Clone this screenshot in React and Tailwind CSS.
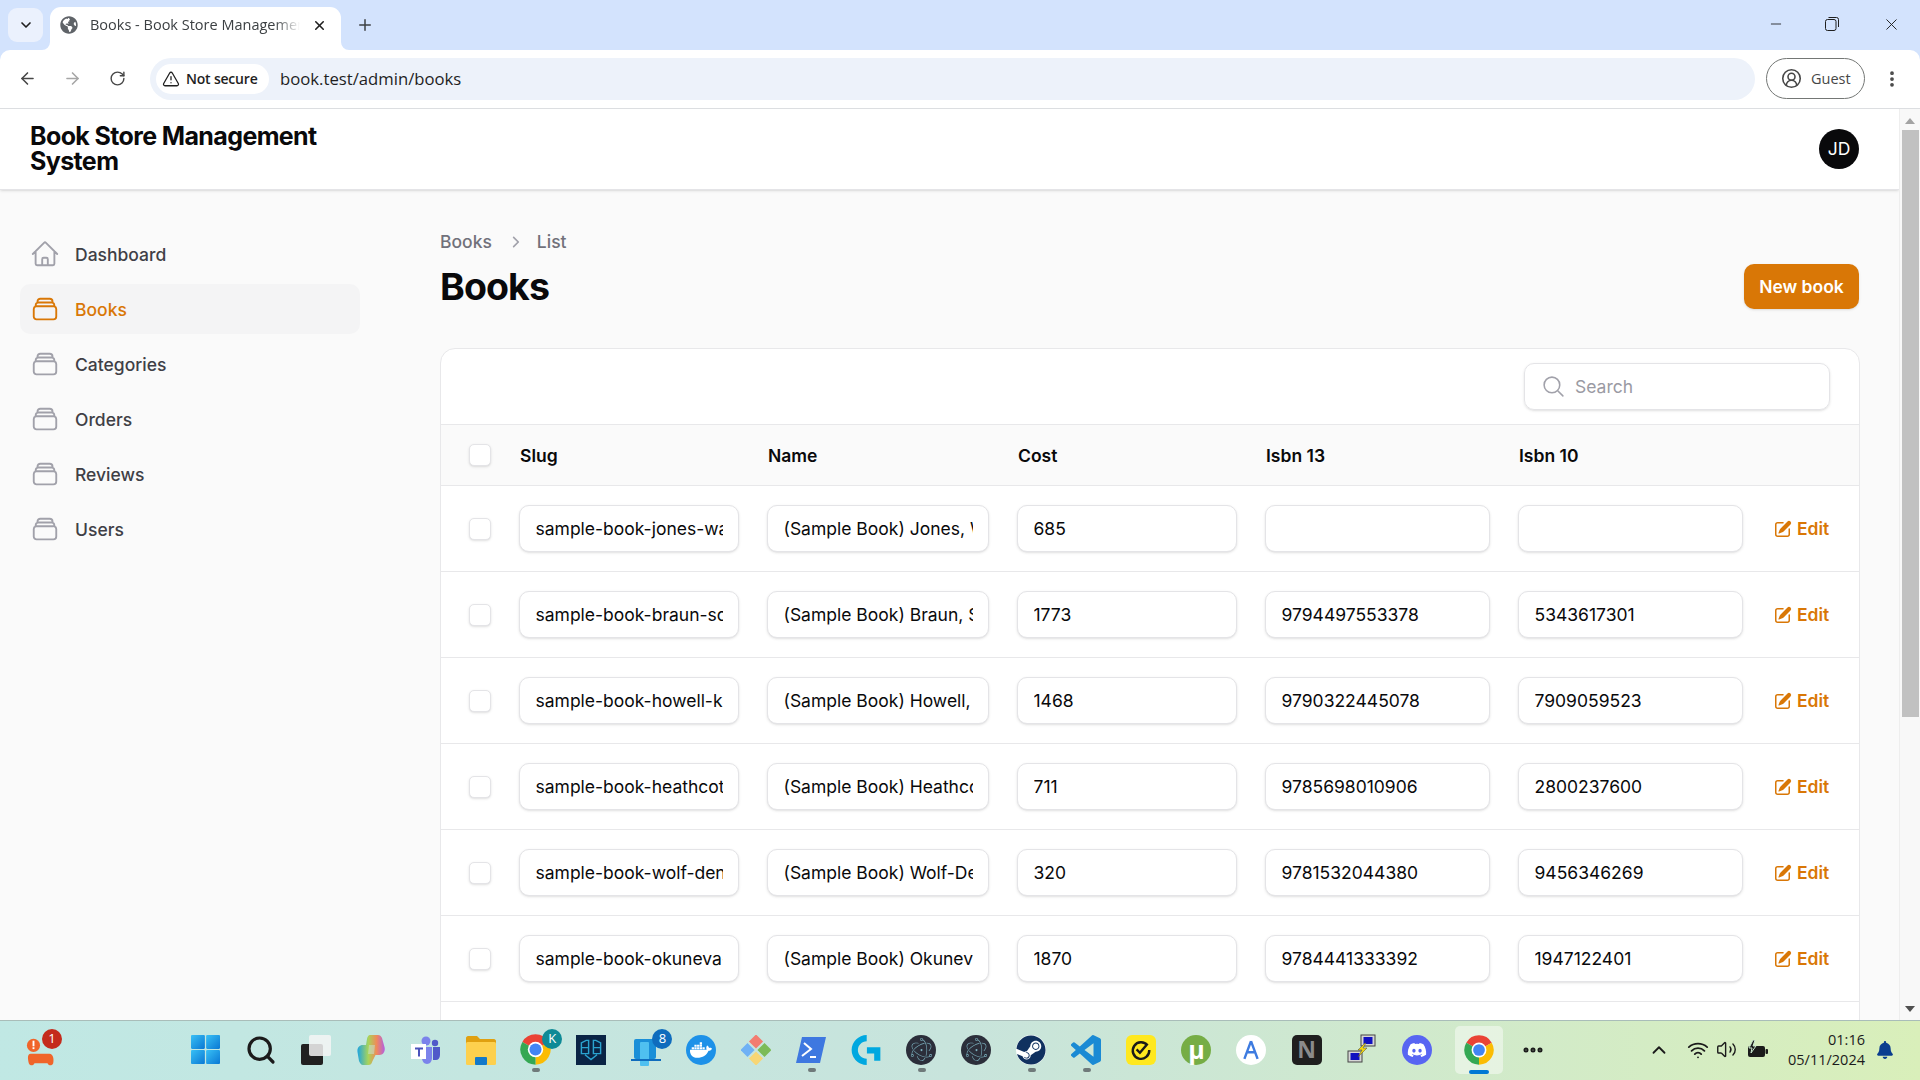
import { ArrowLeft, ArrowRight, RotateCw, TriangleAlert, X, Plus, ChevronDown, ChevronUp, EllipsisVertical, Minus, CircleUserRound, Search, Wifi, Volume2, Ellipsis } from "lucide-react";
import { FaGlobeAmericas, FaDocker, FaSteam, FaDiscord, FaBell } from "react-icons/fa";
import { SiElectron, SiLogitechg } from "react-icons/si";
import { HiOutlineHome, HiOutlineRectangleStack, HiOutlineMagnifyingGlass, HiMiniChevronRight, HiMiniPencilSquare } from "react-icons/hi2";

const navItems = [
	{ label: "Dashboard", home: true },
	{ label: "Books", active: true },
	{ label: "Categories" },
	{ label: "Orders" },
	{ label: "Reviews" },
	{ label: "Users" },
];

const books = [
	{ slug: "sample-book-jones-walter-and-sons", name: "(Sample Book) Jones, Walter and Sons", cost: "685", isbn13: "", isbn10: "" },
	{ slug: "sample-book-braun-schuster-group", name: "(Sample Book) Braun, Schuster and Co", cost: "1773", isbn13: "9794497553378", isbn10: "5343617301" },
	{ slug: "sample-book-howell-kris-and-daughters", name: "(Sample Book) Howell, Kris and Sons", cost: "1468", isbn13: "9790322445078", isbn10: "7909059523" },
	{ slug: "sample-book-heathcote-mraz-group", name: "(Sample Book) Heathcote, Mraz Group", cost: "711", isbn13: "9785698010906", isbn10: "2800237600" },
	{ slug: "sample-book-wolf-denesik-llc", name: "(Sample Book) Wolf-Denesik LLC", cost: "320", isbn13: "9781532044380", isbn10: "9456346269" },
	{ slug: "sample-book-okuneva-hills-inc", name: "(Sample Book) Okuneva, Hills Inc", cost: "1870", isbn13: "9784441333392", isbn10: "1947122401" },
];

const rowGrid = "grid grid-cols-[22px_220px_222px_220px_225px_225px_auto] gap-x-7 items-center pl-[28px]";
const headCell = "pl-[1px] pt-[2px]";

function Chrome({ className }) {
	return (
		<svg viewBox="0 0 24 24" className={className}>
			<path d="M12 12L2.47 6.5A11 11 0 0 1 21.53 6.5Z" fill="#ea4335" />
			<path d="M12 12L21.53 6.5A11 11 0 0 1 12 23Z" fill="#fbbc04" />
			<path d="M12 12L12 23A11 11 0 0 1 2.47 6.5Z" fill="#34a853" />
			<circle cx="12" cy="12" r="5.6" fill="#fff" />
			<circle cx="12" cy="12" r="4.4" fill="#4285f4" />
		</svg>
	);
}

function Checkbox() {
	return <div className="w-[22px] h-[22px] rounded-[5px] bg-white border border-[#e4e4e7] shadow-sm" />;
}

function Slot({ dot, children }) {
	return (
		<div className="relative w-[55.05px] h-full shrink-0 flex items-center justify-center">
			{children}
			{dot && <div className="absolute bottom-[6px] left-[24px] w-[8px] h-[4px] rounded-full bg-[#6f7a7a]" />}
		</div>
	);
}

function Badge({ color, children }) {
	return (
		<div className={`absolute top-[8px] left-[34px] w-[20px] h-[20px] rounded-full ${color} text-white text-[13px] flex items-center justify-center [font-family:'Open_Sans',sans-serif]`}>
			{children}
		</div>
	);
}

function BrowserBar() {
	return (
		<>
			<div className="h-[50px] flex items-end bg-[#d3e3fd] [font-family:'Open_Sans',sans-serif]">
				<div className="w-[35px] h-[34px] ml-[8px] mb-[8px] rounded-[9px] bg-[#ebf1fd] flex items-center justify-center">
					<ChevronDown className="w-[16px] h-[16px] text-[#1f1f1f]" strokeWidth={2.5} />
				</div>
				<div className="relative w-[291px] h-[43px] ml-[7px] bg-white rounded-t-[11px] flex items-center pl-[10px] pb-[7px]">
					<FaGlobeAmericas className="w-[18px] h-[18px] text-[#5f6368]" />
					<span className="ml-[12px] w-[210px] overflow-hidden whitespace-nowrap text-[14.5px] text-[#3c4043] [mask-image:linear-gradient(to_right,black_88%,transparent)]">Books - Book Store Management</span>
					<X className="ml-[12px] w-[15px] h-[15px] text-[#1f1f1f]" strokeWidth={2.5} />
					<svg viewBox="0 0 8 8" className="absolute bottom-0 -left-[8px] w-[8px] h-[8px]"><path d="M8 0V8H0A8 8 0 0 0 8 0Z" fill="#fff" /></svg>
					<svg viewBox="0 0 8 8" className="absolute bottom-0 -right-[8px] w-[8px] h-[8px]"><path d="M0 0V8H8A8 8 0 0 1 0 0Z" fill="#fff" /></svg>
				</div>
				<Plus className="ml-[15px] mb-[16px] w-[18px] h-[18px] text-[#3c4043]" strokeWidth={2} />
				<div className="flex-1" />
				<div className="flex items-center h-[50px] pb-[2px] text-[#1f1f1f]">
					<Minus className="w-[16px] h-[16px] mr-[41px]" strokeWidth={1.3} />
					<svg viewBox="0 0 14 14" className="w-[14px] h-[14px] mr-[43px]" fill="none" stroke="currentColor"><rect x="0.5" y="2.5" width="10.5" height="11" rx="2" /><path d="M3.5 0.5H11.5a2 2 0 0 1 2 2V10" /></svg>
					<X className="w-[19px] h-[19px] mr-[19px]" strokeWidth={1.2} />
				</div>
			</div>
			<div className="h-[59px] flex items-center bg-white rounded-t-[10px] border-b border-[#dcdee1] pb-[1px] [font-family:'Open_Sans',sans-serif]">
				<ArrowLeft className="ml-[18px] w-[19px] h-[19px] text-[#474747]" strokeWidth={2} />
				<ArrowRight className="ml-[26px] w-[19px] h-[19px] text-[#a6a6a6]" strokeWidth={2} />
				<RotateCw className="ml-[27px] w-[17px] h-[17px] text-[#474747]" strokeWidth={2} />
				<div className="ml-[24px] w-[1605px] h-[42px] rounded-full bg-[#edf2fa] flex items-center pl-[6px]">
					<div className="w-[113px] h-[30px] rounded-full bg-white flex items-center pl-[6px]">
						<TriangleAlert className="w-[18px] h-[18px] text-[#1f1f1f]" strokeWidth={1.7} />
						<span className="ml-[6px] text-[14px] font-semibold text-[#1f1f1f] whitespace-nowrap tracking-[-0.2px]">Not secure</span>
					</div>
					<span className="ml-[11px] pt-[1px] text-[16.7px] text-[#1f1f1f]">book.test/admin/books</span>
				</div>
				<div className="ml-[11px] w-[99px] h-[41px] rounded-full border border-[#747775] flex items-center pl-[14px]">
					<CircleUserRound className="w-[21px] h-[21px] text-[#474747]" strokeWidth={1.8} />
					<span className="ml-[9px] text-[14.5px] text-[#474747]">Guest</span>
				</div>
				<EllipsisVertical className="ml-[17px] w-[20px] h-[20px] text-[#474747]" strokeWidth={2.5} />
			</div>
		</>
	);
}

function Sidebar() {
	return (
		<aside className="w-[360px] shrink-0 pl-[20px] pt-[39px] flex flex-col gap-[5px]">
			{navItems.map((item) => (
				<div key={item.label} className={`w-[340px] h-[50px] rounded-[10px] flex items-center pl-[12px] ${item.active ? "bg-[#f4f4f5]" : ""}`}>
					{item.home ? (
						<HiOutlineHome className="w-[30px] h-[30px] -mx-[2.5px] text-[#a1a1aa]" />
					) : (
						<HiOutlineRectangleStack className={`w-[30px] h-[30px] -mx-[2.5px] ${item.active ? "text-[#d97706]" : "text-[#a1a1aa]"}`} />
					)}
					<span className={`ml-[18px] pt-[2px] text-[17.5px] font-medium ${item.active ? "text-[#d97706]" : "text-[#3f3f46]"}`}>{item.label}</span>
				</div>
			))}
		</aside>
	);
}

function BookRow({ book }) {
	const fields = [book.slug, book.name, book.cost, book.isbn13, book.isbn10];
	return (
		<div className={`${rowGrid} h-[86px] border-t border-[#e8e8ea] bg-white`}>
			<Checkbox />
			{fields.map((value, i) => (
				<input
					key={i}
					readOnly
					value={value}
					className="w-full h-[47px] px-[15.5px] rounded-[10px] border border-[#e4e4e7] shadow-sm bg-white text-[17.5px] text-[#09090b] outline-none"
				/>
			))}
			<div className="ml-[2px] flex items-center gap-[4px] text-[#d97706] text-[17.5px] font-semibold whitespace-nowrap">
				<HiMiniPencilSquare className="w-[20px] h-[20px]" />
				<span className="pt-[2px]">Edit</span>
			</div>
		</div>
	);
}

function BooksTable() {
	return (
		<div className="mt-[39px] -mr-[1px] rounded-t-[15px] border border-[#e8e8ea] bg-white">
			<div className="h-[75px] flex items-center justify-end pr-[29px]">
				<div className="w-[306px] h-[47px] rounded-[10px] border border-[#e4e4e7] shadow-sm flex items-center pl-[16px]">
					<HiOutlineMagnifyingGlass className="w-[25px] h-[25px] text-[#a1a1aa]" />
					<span className="ml-[9px] pt-[2px] text-[17.5px] text-[#9a9aa3]">Search</span>
				</div>
			</div>
			<div className={`${rowGrid} h-[61px] border-t border-[#e8e8ea] bg-[#fafafa] text-[17.5px] font-semibold text-[#09090b]`}>
				<Checkbox />
				<span className={headCell}>Slug</span>
				<span className={headCell}>Name</span>
				<span className={headCell}>Cost</span>
				<span className={headCell}>Isbn 13</span>
				<span className={headCell}>Isbn 10</span>
			</div>
			{books.map((book) => (
				<BookRow key={book.slug} book={book} />
			))}
			<div className="h-[86px] border-t border-[#e8e8ea]" />
		</div>
	);
}

function Page() {
	return (
		<div className="flex-1 min-w-0 overflow-hidden bg-[#fafafa] font-['Inter',sans-serif]">
			<header className="h-[81px] bg-white border-b border-[#e4e4e7] shadow-sm flex items-center justify-between pl-[30px] pr-[40px]">
				<div className="w-[300px] text-[25px] leading-[25.5px] font-bold tracking-[-0.62px] text-[#09090b]">Book Store Management System</div>
				<div className="w-[40px] h-[40px] rounded-full bg-[#09090b] text-white text-[17.5px] flex items-center justify-center">JD</div>
			</header>
			<div className="flex">
				<Sidebar />
				<main className="flex-1 min-w-0 pl-[80px] pr-[40px] pt-[41px]">
					<div className="h-[22px] flex items-center text-[17.5px] font-medium text-[#71717a]">
						Books
						<HiMiniChevronRight className="w-[22px] h-[22px] ml-[12px] mr-[11px] text-[#a1a1aa]" />
						List
					</div>
					<div className="mt-[11px] flex items-center justify-between">
						<h1 className="text-[37.5px] leading-[45px] font-bold tracking-[-0.9px] text-[#09090b]">Books</h1>
						<button className="w-[115px] h-[45px] pt-[1px] rounded-[10px] bg-[#d97706] text-white text-[17.5px] font-semibold shadow-sm">New book</button>
					</div>
					<BooksTable />
				</main>
			</div>
		</div>
	);
}

function Scrollbar() {
	return (
		<div className="w-[21px] shrink-0 bg-[#f8f8f8] border-l border-[#eeeeee] flex flex-col items-center">
			<svg viewBox="0 0 10 6" className="w-[10px] h-[6px] mt-[9px]"><path d="M5 0L10 6H0Z" fill="#a3a3a3" /></svg>
			<div className="mt-[6px] w-[17px] h-[587px] bg-[#c1c1c1]" />
			<div className="flex-1" />
			<svg viewBox="0 0 10 6" className="w-[10px] h-[6px] mb-[8px]"><path d="M0 0H10L5 6Z" fill="#505050" /></svg>
		</div>
	);
}

function Taskbar() {
	return (
		<div className="h-[60px] shrink-0 flex items-center border-t border-[#a9bdb9] bg-gradient-to-r from-[#c0e8e4] via-[#c8e4dc] to-[#d9efba] pl-[13px] pb-[2px] [font-family:'Open_Sans',sans-serif]">
			<Slot>
				<svg viewBox="0 0 32 34" className="w-[30px] h-[34px] mt-[2px]">
					<circle cx="8" cy="11" r="7" fill="#f0652a" />
					<rect x="7" y="6" width="2" height="6" fill="#fff" />
					<rect x="7" y="13" width="2" height="2" fill="#fff" />
					<path d="M5 20h20c4 0 5 6 4 10-1 3-5 3-6 0H9c-1 3-5 3-6 0-1-4-2-10 2-10Z" fill="#f0652a" />
				</svg>
				<div className="absolute top-[8px] left-[29px] w-[20px] h-[20px] rounded-full bg-[#c42b1c] text-white text-[13px] flex items-center justify-center">1</div>
			</Slot>
			<div className="w-[110px] shrink-0" />
			<Slot>
				<svg viewBox="0 0 28 28" className="w-[29px] h-[29px]">
					<defs>
						<linearGradient id="win" x1="0" y1="0" x2="1" y2="1"><stop offset="0" stopColor="#38c0f5" /><stop offset="1" stopColor="#0a78d4" /></linearGradient>
					</defs>
					<rect x="0" y="0" width="13.4" height="13.4" rx="1" fill="url(#win)" />
					<rect x="14.6" y="0" width="13.4" height="13.4" rx="1" fill="url(#win)" />
					<rect x="0" y="14.6" width="13.4" height="13.4" rx="1" fill="url(#win)" />
					<rect x="14.6" y="14.6" width="13.4" height="13.4" rx="1" fill="url(#win)" />
				</svg>
			</Slot>
			<Slot><Search className="w-[32px] h-[32px] text-[#1b1b1b]" strokeWidth={2.4} /></Slot>
			<Slot>
				<svg viewBox="0 0 30 30" className="w-[30px] h-[30px]">
					<rect x="0" y="9" width="22" height="21" rx="2" fill="#202020" />
					<rect x="8" y="0" width="22" height="21" rx="2" fill="#f4f4f4" fillOpacity="0.85" />
				</svg>
			</Slot>
			<Slot>
				<svg viewBox="0 0 28 30" className="w-[28px] h-[30px]">
					<defs>
						<linearGradient id="cop" x1="0" y1="0" x2="1" y2="0"><stop offset="0" stopColor="#1fa5e0" /><stop offset="0.4" stopColor="#a8d45a" /><stop offset="0.7" stopColor="#f08a5a" /><stop offset="1" stopColor="#b45fe0" /></linearGradient>
					</defs>
					<path d="M13 0h8c2 0 3 1 4 3l2.500 9c1 4-1 8-5 8h-4l-3 6c-1 3-2 4-4 4H6c-2 0-3-2-4-4L.500 17C0 13 2 10 6 10h3l1-6c.3-2 1.500-4 3-4Z" fill="url(#cop)" />
					<path d="M12 10h6l-1 9h-6Z" fill="#c8e4dc" fillOpacity="0.5" />
				</svg>
			</Slot>
			<Slot>
				<svg viewBox="0 0 30 30" className="w-[30px] h-[30px]">
					<circle cx="15" cy="6" r="4.500" fill="#7b83eb" />
					<circle cx="24" cy="8" r="3.200" fill="#5059c9" />
					<path d="M11 12h10v11c0 3-2 6-5 6s-5-3-5-6Z" fill="#7b83eb" />
					<path d="M22 12h7v8c0 3-2 5-4 5h-3Z" fill="#5059c9" />
					<rect x="0" y="9" width="15" height="15" fill="#fff" />
					<path d="M4 12.500h8v2H9v7H7v-7H4Z" fill="#4b53bc" />
				</svg>
			</Slot>
			<Slot>
				<svg viewBox="0 0 30 30" className="w-[30px] h-[30px]">
					<path d="M0 3c0-1 1-2 2-2h9l3 3h14c1 0 2 1 2 2v4H0Z" fill="#e0a010" />
					<rect x="0" y="7" width="30" height="23" rx="1.500" fill="#fdd04e" />
					<rect x="9" y="22" width="12" height="8" rx="1" fill="#1479c9" />
				</svg>
			</Slot>
			<Slot dot>
				<Chrome className="w-[33px] h-[33px]" />
				<Badge color="bg-[#0e8a96]">K</Badge>
			</Slot>
			<Slot>
				<div className="w-[30px] h-[30px] bg-[#0a2445] flex items-center justify-center">
					<svg viewBox="0 0 20 20" className="w-[24px] h-[24px]" fill="none" stroke="#2aa3d0" strokeWidth="1.2"><path d="M2 4l4-2h2v11H2ZM18 4l-4-2h-2v11h6ZM2 8h6M12 8h6M5 14l5 4 5-4" /></svg>
				</div>
			</Slot>
			<Slot>
				<svg viewBox="0 0 30 32" className="w-[30px] h-[32px] mt-[2px]">
					<rect x="3" y="4" width="22" height="20" rx="2" fill="#1a8fd8" />
					<rect x="9" y="7" width="9" height="24" rx="1" fill="#4fc0f0" />
					<rect x="0" y="24" width="30" height="2" fill="#0f6cbd" />
				</svg>
				<Badge color="bg-[#0f6cbd]">8</Badge>
			</Slot>
			<Slot>
				<div className="w-[30px] h-[30px] rounded-full bg-[#1d91e8] flex items-center justify-center">
					<FaDocker className="w-[22px] h-[22px] text-white" />
				</div>
			</Slot>
			<Slot>
				<svg viewBox="0 0 30 30" className="w-[30px] h-[30px]">
					<rect x="10" y="1.500" width="10" height="10" transform="rotate(45 15 6.500)" fill="#f37c70" />
					<rect x="18.500" y="10" width="10" height="10" transform="rotate(45 23.500 15)" fill="#7cbb56" />
					<rect x="10" y="18.500" width="10" height="10" transform="rotate(45 15 23.500)" fill="#f7d675" />
					<rect x="1.500" y="10" width="10" height="10" transform="rotate(45 6.500 15)" fill="#6fb1f5" />
				</svg>
			</Slot>
			<Slot dot>
				<svg viewBox="0 0 30 30" className="w-[30px] h-[30px]">
					<path d="M6 2H30L24 28H0Z" fill="#3e78e0" />
					<path d="M8 8l7 6-9 7M14 22h6" fill="none" stroke="#fff" strokeWidth="2" />
				</svg>
			</Slot>
			<Slot><SiLogitechg className="w-[30px] h-[30px] text-[#00a8e0]" /></Slot>
			<Slot dot>
				<div className="w-[30px] h-[30px] rounded-full bg-[#2b2e3a] flex items-center justify-center"><SiElectron className="w-[23px] h-[23px] text-[#9feaf9] opacity-70" /></div>
			</Slot>
			<Slot>
				<div className="w-[30px] h-[30px] rounded-full bg-[#2b2e3a] flex items-center justify-center"><SiElectron className="w-[23px] h-[23px] text-[#9feaf9] opacity-70" /></div>
			</Slot>
			<Slot dot>
				<div className="w-[30px] h-[30px] rounded-full bg-white flex items-center justify-center"><FaSteam className="w-[30px] h-[30px] text-[#10315f]" /></div>
			</Slot>
			<Slot dot>
				<svg viewBox="0 0 24 24" className="w-[30px] h-[30px]"><path fill="#1a8ad4" d="M23.15 2.587L18.21.21a1.494 1.494 0 0 0-1.705.29l-9.46 8.63-4.12-3.128a.999.999 0 0 0-1.276.057L.327 7.261A1 1 0 0 0 .326 8.74L3.899 12 .326 15.26a1 1 0 0 0 .001 1.479L1.65 17.94a.999.999 0 0 0 1.276.057l4.12-3.128 9.46 8.63a1.492 1.492 0 0 0 1.704.29l4.942-2.377A1.5 1.5 0 0 0 24 20.06V3.939a1.5 1.5 0 0 0-.85-1.352zm-5.146 14.861L10.826 12l7.178-5.448v10.896z" /></svg>
			</Slot>
			<Slot>
				<div className="w-[30px] h-[30px] rounded-[6px] bg-[#ffe81f] flex items-center justify-center">
					<svg viewBox="0 0 20 20" className="w-[22px] h-[22px]" fill="none" stroke="#1a1a1a" strokeWidth="2.2"><path d="M16 6A7.5 7.5 0 1 0 17.5 10" /><path d="M6 9.500l3 3 6-7" /></svg>
				</div>
			</Slot>
			<Slot>
				<div className="w-[30px] h-[30px] rounded-full bg-[#76ad45] text-white text-[25px] font-bold flex items-center justify-center leading-none">µ</div>
			</Slot>
			<Slot>
				<div className="w-[30px] h-[30px] rounded-full bg-white flex items-center justify-center">
					<svg viewBox="0 0 20 20" className="w-[22px] h-[22px]" fill="none" stroke="#3d7be0" strokeWidth="2.2"><path d="M10 2L4 18M10 2l6 16M6 12h8" /></svg>
				</div>
			</Slot>
			<Slot>
				<div className="w-[30px] h-[30px] rounded-[5px] bg-[#1f1f1f] text-[#8b8b8b] text-[23px] font-bold flex items-center justify-center">N</div>
			</Slot>
			<Slot>
				<svg viewBox="0 0 30 32" className="w-[30px] h-[32px]">
					<rect x="14" y="1" width="14" height="11" fill="#d6d6d6" stroke="#444" />
					<rect x="16.500" y="3" width="9" height="7" fill="#1010c0" />
					<rect x="1" y="17" width="14" height="11" fill="#d6d6d6" stroke="#444" />
					<rect x="3.500" y="19" width="9" height="7" fill="#1010c0" />
					<path d="M18 9L11 16h4l-4 7 9-9h-4l3-5Z" fill="#f5d90a" stroke="#444" strokeWidth="0.5" />
				</svg>
			</Slot>
			<Slot>
				<div className="w-[30px] h-[30px] rounded-full bg-[#5865f2] flex items-center justify-center"><FaDiscord className="w-[20px] h-[20px] text-white" /></div>
			</Slot>
			<div className="relative ml-[11px] w-[48px] h-[48px] rounded-[5px] bg-white/45 flex items-center justify-center shrink-0">
				<Chrome className="w-[32px] h-[32px]" />
				<div className="absolute bottom-0 left-[14px] w-[20px] h-[4px] rounded-full bg-[#0078d4]" />
			</div>
			<Ellipsis className="ml-[18px] w-[24px] h-[24px] text-[#1b1b1b]" strokeWidth={3} />
			<div className="flex-1" />
			<ChevronUp className="w-[22px] h-[22px] text-[#1b1b1b]" strokeWidth={2} />
			<Wifi className="ml-[17px] w-[22px] h-[22px] text-[#1b1b1b]" strokeWidth={2} />
			<Volume2 className="ml-[7px] w-[21px] h-[21px] text-[#1b1b1b]" strokeWidth={1.6} />
			<svg viewBox="0 0 22 20" className="ml-[10px] w-[22px] h-[20px]">
				<rect x="1" y="6" width="17" height="11" rx="2" fill="#1b1b1b" />
				<rect x="18.500" y="9" width="2.500" height="5" rx="1" fill="#1b1b1b" />
				<path d="M6 0L2 8h3l-1 5 5-7H6l2-6Z" fill="#1b1b1b" stroke="#c9e8d0" strokeWidth="1" />
			</svg>
			<div className="ml-[18px] w-[78px] text-right text-[14.5px] leading-[20px] text-[#1b1b1b]">
				<div>01:16</div>
				<div className="-ml-[10px] whitespace-nowrap">05/11/2024</div>
			</div>
			<FaBell className="ml-[11px] mr-[26px] w-[18px] h-[18px] text-[#0a3d8f]" />
		</div>
	);
}

export default function App() {
	return (
		<div className="h-screen w-full flex flex-col overflow-hidden bg-[#d3e3fd]">
			<BrowserBar />
			<div className="flex-1 min-h-0 flex bg-white">
				<Page />
				<Scrollbar />
			</div>
			<Taskbar />
		</div>
	);
}
